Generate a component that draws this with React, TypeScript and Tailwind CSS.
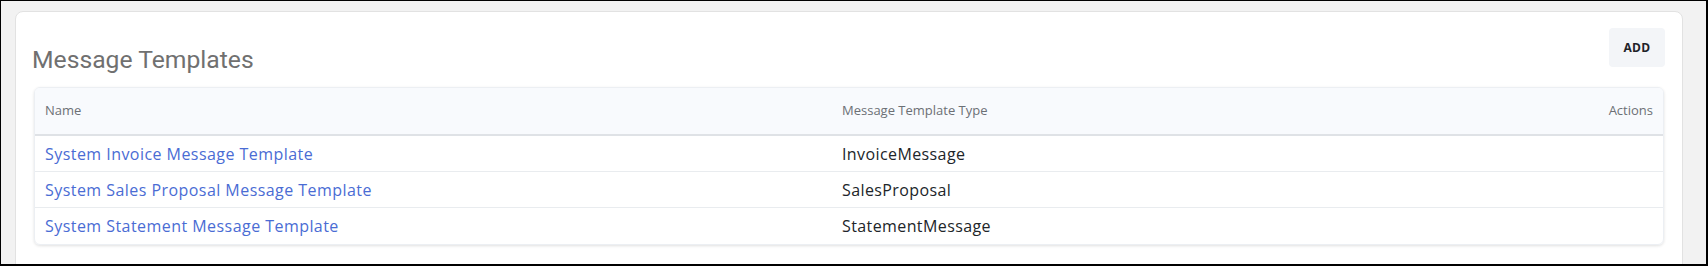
const rows = [
  { name: 'System Invoice Message Template', type: 'InvoiceMessage' },
  { name: 'System Sales Proposal Message Template', type: 'SalesProposal' },
  { name: 'System Statement Message Template', type: 'StatementMessage' },
];

export default function App() {
  return (
    <div className="w-[1708px] h-[266px] overflow-hidden bg-[#f2f2f2] border-black border-t border-l border-r-2 border-b-2 pl-[14px] pt-[10px] pr-[23px] font-['Open_Sans',sans-serif]">
      <div className="h-[300px] bg-white border border-[#e2e2e2] rounded-lg px-[17px] pt-[16px]">
        <div className="flex justify-between items-start">
          <h1 className="mt-[16px] -ml-px text-[24.7px] leading-[32px] text-[#707070] font-['Roboto',sans-serif] font-normal">
            Message Templates
          </h1>
          <button className="w-[56px] h-[39px] bg-[#f3f5f8] rounded-sm text-[12px] font-bold text-[#1f2329] tracking-[0.3px]">
            ADD
          </button>
        </div>

        <div className="mt-[11px] ml-px mr-px rounded-md border border-[#eceff3] shadow-[0_1px_3px_rgba(0,0,0,0.12)] overflow-hidden">
          <div className="flex items-center h-[48px] bg-[#f8fafd] border-b-2 border-[#dfe2e6] px-[10px] text-[13px] text-[#6c7075]">
            <div className="w-[797px] shrink-0">Name</div>
            <div className="flex-1">Message Template Type</div>
            <div className="text-right">Actions</div>
          </div>
          {rows.map((r, i) => (
            <div
              key={r.name}
              className={
                'flex items-center h-[36px] px-[10px] text-[16px] ' +
                (i < rows.length - 1 ? 'border-b border-[#e9ecef]' : '')
              }
            >
              <div className="w-[797px] shrink-0 text-[#4a6cd4] tracking-[0.45px]">{r.name}</div>
              <div className="flex-1 text-[#212529] tracking-[0.4px]">{r.type}</div>
            </div>
          ))}
        </div>
      </div>
    </div>
  );
}
